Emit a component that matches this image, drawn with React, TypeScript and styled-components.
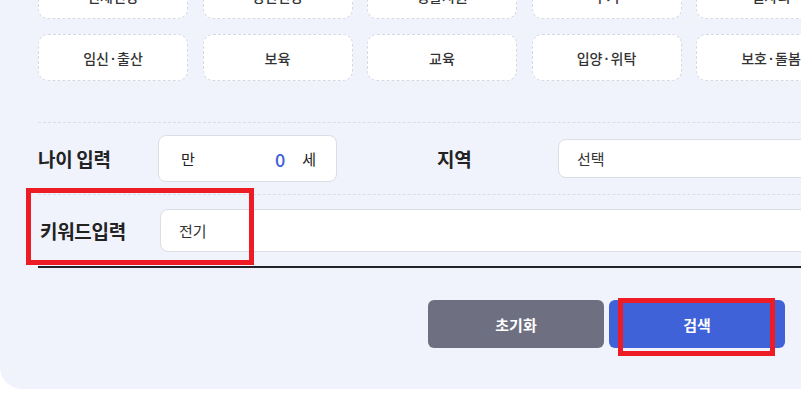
import React from "react";
import styled, { createGlobalStyle } from "styled-components";

const Global = createGlobalStyle`
  html, body { margin: 0; padding: 0; overflow: hidden; background: #ffffff; }
  body { font-family: "Noto Sans CJK KR", "Noto Sans", sans-serif; }
  * { box-sizing: border-box; }
`;

const Page = styled.div`
  position: relative;
  display: flow-root;
  width: 1213px;
  height: 419px;
`;

const Panel = styled.section`
  display: flow-root;
  width: 1213px;
  padding: 0 38px 41px;
  background: #f0f3fc;
  border-radius: 0 0 22px 22px;
`;

const ChipGrid = styled.div`
  display: grid;
  grid-template-columns: repeat(7, 150px);
  grid-auto-rows: 47px;
  column-gap: 14.5px;
  row-gap: 15px;
  margin-top: -28px;
`;

const Chip = styled.button`
  display: flex;
  align-items: center;
  justify-content: center;
  background: #ffffff;
  border: 1px dashed #d6d9e2;
  border-radius: 10px;
  font-family: inherit;
  font-size: 14px;
  font-weight: 500;
  color: #333333;
  padding: 0;
`;

const Divider = styled.div<{ $top?: number }>`
  margin-top: ${(p) => p.$top ?? 0}px;
  border-top: 1px dashed #dadde7;
`;

const FormRow = styled.div<{ $indent?: number }>`
  display: flex;
  align-items: center;
  height: 71px;
  padding-left: ${(p) => p.$indent ?? 0}px;
`;

const Label = styled.div<{ $width: number }>`
  width: ${(p) => p.$width}px;
  flex: none;
  font-size: 19px;
  font-weight: 700;
  color: #222222;
  letter-spacing: -0.3px;
`;

const AgeBox = styled.div`
  display: flex;
  align-items: center;
  width: 179px;
  height: 47px;
  padding: 0 20px 0 22px;
  background: #ffffff;
  border: 1px solid #dcdee6;
  border-radius: 8px;
  font-size: 15px;
  color: #222222;
  margin-right: 100px;
`;

const AgeValue = styled.span`
  margin-left: auto;
  margin-right: 17px;
  font-size: 18px;
  font-weight: 500;
  color: #3d5fd8;
`;

const Field = styled.div<{ $height: number }>`
  flex: 1;
  display: flex;
  align-items: center;
  height: ${(p) => p.$height}px;
  padding-left: 18px;
  background: #ffffff;
  border: 1px solid #dcdee6;
  border-radius: 8px;
  font-size: 15px;
  color: #333333;
`;

const ThickRule = styled.div`
  height: 2px;
  background: #222228;
`;

const ButtonBar = styled.div`
  display: flex;
  justify-content: center;
  gap: 5px;
  margin-top: 32px;
`;

const ActionButton = styled.button<{ $variant: "reset" | "search" }>`
  width: 176px;
  height: 48px;
  border: none;
  border-radius: 6px;
  background: ${(p) => (p.$variant === "reset" ? "#6e7082" : "#3f62d8")};
  color: #ffffff;
  font-family: inherit;
  font-size: 15px;
  font-weight: 700;
`;

const Highlight = styled.div<{ $x: number; $y: number; $w: number; $h: number }>`
  position: absolute;
  left: ${(p) => p.$x}px;
  top: ${(p) => p.$y}px;
  width: ${(p) => p.$w}px;
  height: ${(p) => p.$h}px;
  border: 5px solid #ed1c24;
  pointer-events: none;
`;

const categories = [
  "신체건강", "정신건강", "생활지원", "주거", "일자리", "문화·여가", "안전·위기",
  "임신·출산", "보육", "교육", "입양·위탁", "보호·돌봄", "서민금융", "법률",
];

export default function App() {
  return (
    <>
      <Global />
      <Page>
        <Panel>
          <ChipGrid>
            {categories.map((c) => (
              <Chip key={c}>{c}</Chip>
            ))}
          </ChipGrid>
          <Divider $top={41} />
          <FormRow>
            <Label $width={120}>나이 입력</Label>
            <AgeBox>
              <span>만</span>
              <AgeValue>0</AgeValue>
              <span>세</span>
            </AgeBox>
            <Label $width={121}>지역</Label>
            <Field $height={39}>선택</Field>
          </FormRow>
          <Divider />
          <FormRow $indent={2}>
            <Label $width={120}>키워드입력</Label>
            <Field $height={43}>전기</Field>
          </FormRow>
          <ThickRule />
          <ButtonBar>
            <ActionButton $variant="reset">초기화</ActionButton>
            <ActionButton $variant="search">검색</ActionButton>
          </ButtonBar>
        </Panel>
        <Highlight $x={26} $y={188} $w={228} $h={77} />
        <Highlight $x={618} $y={298} $w={157} $h={58} />
      </Page>
    </>
  );
}
